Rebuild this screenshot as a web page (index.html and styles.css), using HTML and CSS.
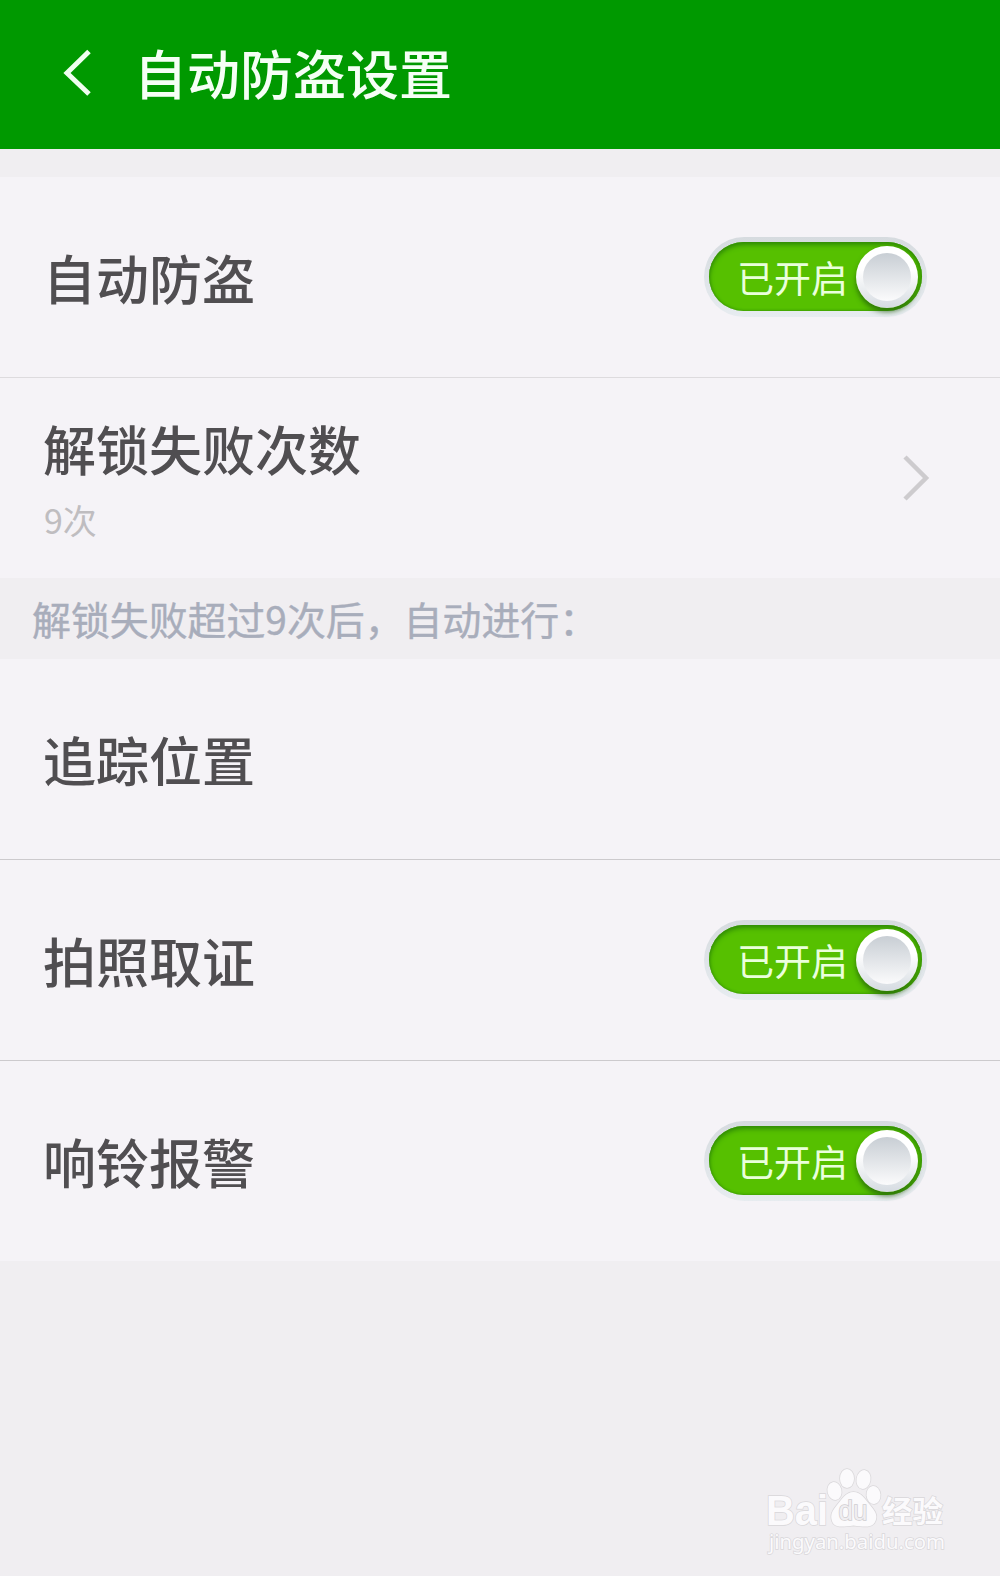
FILE: index.html
```html
<!DOCTYPE html>
<html lang="zh-CN">
<head>
    <meta charset="UTF-8">
    <meta name="viewport" content="width=device-width, initial-scale=1.0">
    <title>自动防盗设置</title>
    <link rel="stylesheet" href="styles.css">
</head>
<body>
    <header class="header">
        <svg class="back" width="30" height="48" viewBox="0 0 30 48">
            <path d="M28 3.500 L6 25 L28 46" fill="none" stroke="#f0fff0" stroke-width="5"/>
        </svg>
        <h1>自动防盗设置</h1>
    </header>
    <main>
        <div class="row line light">
            <span class="label">自动防盗</span>
            <div class="switch"><div class="track"><span>已开启</span><i class="knob"></i></div></div>
        </div>
        <div class="row">
            <div class="label-group">
                <span class="label">解锁失败次数</span>
                <span class="sub">9次</span>
            </div>
            <svg class="arrow" width="28" height="46" viewBox="0 0 28 46">
                <path d="M3 2 L24 23 L3 44" fill="none" stroke="#cdcbce" stroke-width="4.500"/>
            </svg>
        </div>
        <p class="hint">解锁失败超过9次后，自动进行：</p>
        <div class="row line">
            <span class="label">追踪位置</span>
        </div>
        <div class="row line">
            <span class="label">拍照取证</span>
            <div class="switch"><div class="track"><span>已开启</span><i class="knob"></i></div></div>
        </div>
        <div class="row">
            <span class="label">响铃报警</span>
            <div class="switch"><div class="track"><span>已开启</span><i class="knob"></i></div></div>
        </div>
    </main>
    <svg class="watermark" width="220" height="110" viewBox="0 0 220 110">
        <g class="mark">
            <text class="latin" x="16" y="63.500" textLength="62" lengthAdjust="spacingAndGlyphs">Bai</text>
            <ellipse cx="84.500" cy="30" rx="7" ry="9" transform="rotate(-12 84.500 30)"/>
            <ellipse cx="97" cy="17.500" rx="7" ry="9.500"/>
            <ellipse cx="113.500" cy="18.500" rx="7" ry="9.500" transform="rotate(10 113.500 18.500)"/>
            <ellipse cx="123.500" cy="34" rx="7" ry="9" transform="rotate(-5 123.500 34)"/>
            <path d="M103.500 31 C96 31 92 38 87 44 C82 50 80 54 82 60 C84 67 92 66 103.500 64.500 C115 66 123 67 125.500 60 C128 54 125 50 120 44 C115 38 111 31 103.500 31 Z"/>
            <text class="du" x="88.500" y="59" textLength="29" lengthAdjust="spacingAndGlyphs">du</text>
            <text class="jingyan" x="132" y="61" textLength="61" lengthAdjust="spacingAndGlyphs">经验</text>
            <text class="site" x="19" y="88" textLength="176" lengthAdjust="spacingAndGlyphs">jingyan.baidu.com</text>
        </g>
    </svg>
</body>
</html>
```
FILE: styles.css
```css
body {
    margin: 0;
    min-height: 1576px;
    position: relative;
    background-color: #f0eef1;
    color: #504e51;
    font-family: "Noto Sans CJK SC", sans-serif;
}
.header {
    box-sizing: border-box;
    height: 149px;
    display: flex;
    align-items: center;
    padding: 0 0 6px 61px;
    margin-bottom: 28px;
    background-color: #009900;
}
.header h1 {
    margin: 0 0 0 43px;
    color: #f5fff5;
    font-size: 53px;
    font-weight: 500;
    line-height: 60px;
}
.row {
    box-sizing: border-box;
    height: 200px;
    display: flex;
    align-items: center;
    justify-content: space-between;
    padding: 0 73px 0 43px;
    background-color: #f5f3f7;
}
.row.line {
    height: 201px;
    border-bottom: 1px solid #cccacd;
}
.row.line.light {
    border-color: #dddbde;
}
.label {
    font-size: 53px;
    font-weight: 500;
    line-height: 60px;
}
.label-group {
    display: flex;
    flex-direction: column;
}
.sub {
    margin: 22px 0 -2px 1px;
    font-size: 34px;
    line-height: 40px;
    color: #bfbdc0;
}
.arrow {
    margin-right: -3px;
}
.hint {
    margin: 0;
    padding-left: 32px;
    height: 81px;
    line-height: 81px;
    font-size: 38.9px;
    color: #a8adbb;
    -webkit-text-stroke: 0.4px #a8adbb;
}
.switch {
    box-sizing: border-box;
    width: 223px;
    height: 80px;
    padding: 5px;
    border-radius: 40px;
    background: linear-gradient(#d6dbdf, #e7ecf0);
}
.track {
    box-sizing: border-box;
    height: 69px;
    display: flex;
    align-items: center;
    justify-content: space-between;
    padding: 0 4px 0 28px;
    border-radius: 35px;
    background-color: #56c000;
    box-shadow: inset 0 3px 5px #318d05, inset 0 0 3px #2f8b08;
}
.track span {
    color: #eaffdc;
    font-size: 37px;
    line-height: 66px;
}
.knob {
    box-sizing: border-box;
    width: 62px;
    height: 62px;
    border: 7px solid transparent;
    border-radius: 50%;
    background: linear-gradient(#c8ced4, #fbfbfc) padding-box, linear-gradient(#ffffff 40%, #d5dbe1) border-box;
    box-shadow: 0 4px 5px rgba(30, 90, 10, 0.7);
}
.watermark {
    position: absolute;
    left: 750px;
    top: 1461px;
}
.mark {
    fill: #fbfafc;
    stroke: #d9d7da;
    stroke-width: 1.5;
    paint-order: stroke;
}
.latin {
    font: bold 43px "Liberation Sans", sans-serif;
}
.du {
    font: 27px "Liberation Sans", sans-serif;
    fill: #f0eef1;
    stroke: #cfcdd0;
}
.jingyan {
    font-size: 30px;
    font-weight: 700;
}
.site {
    font: 20px "Noto Sans", sans-serif;
}
```
